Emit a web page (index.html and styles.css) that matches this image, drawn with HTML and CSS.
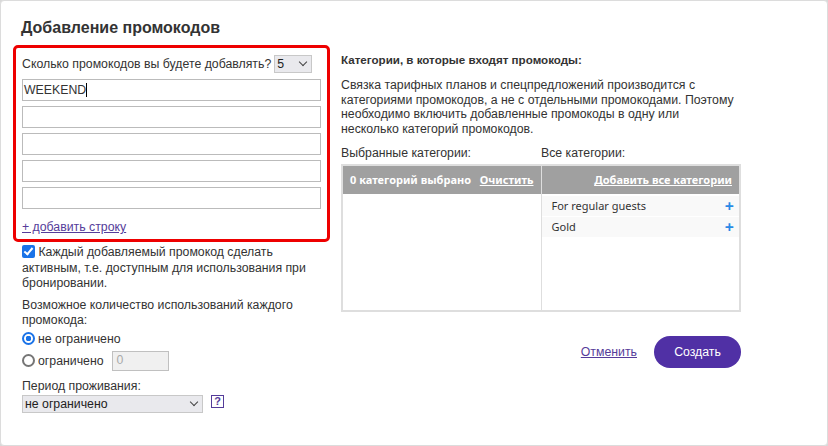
FILE: index.html
```html
<!DOCTYPE html>
<html lang="ru">
<head>
    <meta charset="UTF-8">
    <title>Добавление промокодов</title>
    <link rel="stylesheet" href="styles.css">
</head>
<body>

<div class="dialog">
    <h1>Добавление промокодов</h1>

    <div class="columns">
        <!-- Левая колонка: ввод промокодов -->
        <div class="left-col">
            <div class="codes-box">
                <div class="count-row">
                    <span>Сколько промокодов вы будете добавлять?</span>
                    <span class="fake-select small-select">5 <span class="chev"></span></span>
                </div>
                <div class="code-input">WEEKEND<span class="caret"></span></div>
                <div class="code-input"></div>
                <div class="code-input"></div>
                <div class="code-input"></div>
                <div class="code-input"></div>
                <a href="#" class="add-row">+ добавить строку</a>
            </div>

            <label class="check-row">
                <span class="checkbox"></span>
                Каждый добавляемый промокод сделать активным, т.е. доступным для использования при бронировании.
            </label>

            <p class="usage-title">Возможное количество использований каждого промокода:</p>
            <div class="radio-row">
                <span class="radio checked"></span> не ограничено
            </div>
            <div class="radio-row">
                <span class="radio"></span> ограничено
                <span class="limit-input">0</span>
            </div>

            <p class="period-title">Период проживания:</p>
            <div class="period-row">
                <span class="fake-select period-select">не ограничено <span class="chev"></span></span>
                <span class="help">?</span>
            </div>
        </div>

        <!-- Правая колонка: категории -->
        <div class="right-col">
            <h3>Категории, в которые входят промокоды:</h3>
            <p class="note">Связка тарифных планов и спецпредложений производится с категориями промокодов, а не с отдельными промокодами. Поэтому необходимо включить добавленные промокоды в одну или несколько категорий промокодов.</p>

            <div class="cat-labels">
                <span>Выбранные категории:</span>
                <span>Все категории:</span>
            </div>
            <div class="cat-table">
                <div class="cat-pane">
                    <div class="cat-head">
                        <span>0 категорий выбрано</span>
                        <a href="#">Очистить</a>
                    </div>
                </div>
                <div class="cat-pane all">
                    <div class="cat-head right">
                        <a href="#">Добавить все категории</a>
                    </div>
                    <div class="cat-item">For regular guests <span class="plus">+</span></div>
                    <div class="cat-item">Gold <span class="plus">+</span></div>
                </div>
            </div>

            <div class="actions">
                <a href="#" class="cancel">Отменить</a>
                <button class="create">Создать</button>
            </div>
        </div>
    </div>
</div>

</body>
</html>
```

FILE: styles.css
```css
body {
    margin: 0;
    padding: 0;
    background-color: #d8d8d8;
    font-family: "Liberation Sans", Arial, sans-serif;
    font-size: 12.3px;
    color: #333;
}
.dialog {
    box-sizing: border-box;
    width: 828px;
    height: 446px;
    background-color: white;
    border: 1px solid #dcdcdc;
    border-radius: 4px;
    padding: 17px 12px 0 12px;
}
h1 {
    margin: 0 0 7px 8px;
    font-size: 16px;
    line-height: 20px;
    color: #333;
}
.columns {
    display: flex;
    gap: 11px;
}
.left-col {
    width: 317px;
}
.codes-box {
    border: 3px solid #ee0000;
    border-radius: 5px;
    padding: 7px 6px 4px 6px;
}
.count-row {
    display: flex;
    align-items: center;
    gap: 3px;
    height: 18px;
    margin-bottom: 6px;
    white-space: nowrap;
}
.fake-select {
    display: inline-flex;
    align-items: center;
    justify-content: space-between;
    box-sizing: border-box;
    background-color: #e9e9ed;
    border: 1px solid #c8c8c8;
    color: #222;
    padding: 0 5px 0 2px;
}
.small-select {
    width: 38px;
    height: 18px;
}
.chev {
    width: 5px;
    height: 5px;
    border-right: 1.5px solid #444;
    border-bottom: 1.5px solid #444;
    transform: rotate(45deg);
    margin-top: -4px;
}
.code-input {
    box-sizing: border-box;
    height: 22px;
    border: 1px solid #bbb;
    margin-bottom: 5px;
    padding: 2px 1px;
    line-height: 16px;
    color: #333;
    display: flex;
    align-items: center;
}
.caret {
    display: inline-block;
    width: 1px;
    height: 14px;
    background-color: #000;
}
.add-row {
    display: inline-block;
    margin-top: 5px;
    color: #553c9a;
    line-height: 16px;
}
.check-row {
    display: block;
    margin: 3px 0 0 9px;
    line-height: 15.5px;
}
.checkbox {
    display: inline-block;
    vertical-align: -2px;
    width: 13px;
    height: 13px;
    border-radius: 2px;
    background-color: #1a73e8;
    position: relative;
}
.checkbox::after {
    content: "";
    position: absolute;
    left: 4px;
    top: 1px;
    width: 3px;
    height: 7px;
    border-right: 2px solid white;
    border-bottom: 2px solid white;
    transform: rotate(40deg);
}
.usage-title {
    margin: 6px 0 1px 9px;
    line-height: 15px;
}
.radio-row {
    display: flex;
    align-items: center;
    gap: 3px;
    margin-left: 9px;
    height: 20px;
    margin-bottom: 2px;
}
.radio {
    box-sizing: border-box;
    width: 13px;
    height: 13px;
    border: 2px solid #767676;
    border-radius: 50%;
}
.radio.checked {
    border-color: #1a73e8;
    background: radial-gradient(circle, #1a73e8 0 2.6px, white 3px);
}
.limit-input {
    box-sizing: border-box;
    width: 57px;
    height: 20px;
    margin-left: 5px;
    border: 1px solid #c0c0c0;
    background-color: #f0f0f0;
    color: #aaa;
    padding: 1px 4px;
}
.period-title {
    margin: 8px 0 0 9px;
    line-height: 15px;
}
.period-row {
    display: flex;
    align-items: center;
    gap: 8px;
    margin-left: 9px;
    margin-top: 1px;
}
.period-select {
    width: 181px;
    height: 18px;
}
.help {
    box-sizing: border-box;
    width: 13px;
    height: 13px;
    border: 1px solid #553c9a;
    color: #553c9a;
    font-size: 11px;
    font-weight: bold;
    line-height: 11px;
    text-align: center;
    margin-top: -4px;
}
.right-col {
    width: 400px;
    padding-top: 7px;
}
.right-col h3 {
    margin: 0 0 10px 0;
    font-size: 11.6px;
    line-height: 16px;
}
.note {
    margin: 0 0 8px 0;
    padding-right: 4px;
    line-height: 14.7px;
}
.cat-labels {
    display: flex;
    line-height: 16px;
    margin-bottom: 3px;
}
.cat-labels span {
    width: 200px;
}
.cat-table {
    display: flex;
    box-sizing: border-box;
    height: 148px;
    border: 2px solid #dedede;
    font-family: "Noto Sans", "DejaVu Sans", sans-serif;
    font-size: 11px;
}
.cat-pane {
    width: 199px;
}
.cat-pane.all {
    border-left: 1px solid #dedede;
}
.cat-head {
    display: flex;
    justify-content: space-between;
    align-items: center;
    height: 28px;
    padding: 0 7px;
    background-color: #a0a0a0;
    color: white;
    font-weight: bold;
    margin-bottom: 2px;
}
.cat-head.right {
    justify-content: flex-end;
}
.cat-head a {
    color: white;
}
.cat-item {
    display: flex;
    justify-content: space-between;
    align-items: center;
    height: 20px;
    padding: 0 5px 0 10px;
    background-color: #f9f9f9;
    color: #333;
    margin-bottom: 1px;
}
.plus {
    color: #2a8ae6;
    font-size: 16px;
    font-weight: bold;
}
.actions {
    display: flex;
    justify-content: flex-end;
    align-items: center;
    gap: 17px;
    margin-top: 24px;
}
.cancel {
    color: #553c9a;
}
.create {
    width: 87px;
    height: 32px;
    border: none;
    border-radius: 16px;
    background-color: #5030a5;
    color: white;
    font-family: "Liberation Sans", Arial, sans-serif;
    font-size: 12.3px;
    cursor: pointer;
}
```
